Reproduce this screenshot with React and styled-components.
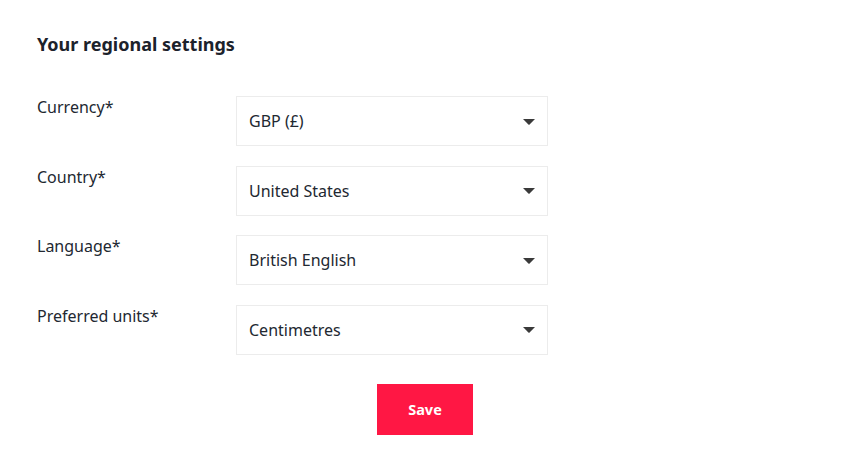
import React from "react";
import styled, { createGlobalStyle } from "styled-components";

const Global = createGlobalStyle`
  html, body { margin: 0; padding: 0; background: #ffffff; }
  body { font-family: "Noto Sans", "Liberation Sans", sans-serif; color: #222831; }
`;

const Page = styled.div`
  width: 852px;
  box-sizing: border-box;
  padding: 32px 0 0 37px;
`;

const Heading = styled.h2`
  margin: 0 0 40px 0;
  font-size: 18px;
  line-height: 24px;
  font-weight: 700;
  color: #1c222b;
`;

const Form = styled.div`
  display: grid;
  grid-template-columns: 199px 312px;
  row-gap: 19.67px;
`;

const Label = styled.div`
  font-size: 16px;
  line-height: 20px;
  padding-top: 1px;
  color: #222831;
`;

const Select = styled.div`
  height: 50px;
  box-sizing: border-box;
  border: 1px solid #ececec;
  display: flex;
  align-items: center;
  justify-content: space-between;
  padding: 0 12px 0 12px;
  font-size: 16px;
  color: #222831;
`;

const Arrow = styled.svg`
  width: 12px;
  height: 6px;
  margin-top: 1px;
`;

const Actions = styled.div`
  display: flex;
  justify-content: center;
  width: 776px;
  margin-top: 29px;
`;

const Button = styled.button`
  width: 96px;
  height: 51px;
  border: 0;
  background: #ff1744;
  color: #ffffff;
  font-family: "Noto Sans", "Liberation Sans", sans-serif;
  font-weight: 700;
  font-size: 14.5px;
  cursor: pointer;
`;

const rows = [
  ["Currency*", "GBP (£)"],
  ["Country*", "United States"],
  ["Language*", "British English"],
  ["Preferred units*", "Centimetres"],
];

export default function App() {
  return (
    <>
      <Global />
      <Page>
        <Heading>Your regional settings</Heading>
        <Form>
          {rows.map(([l, v]) => (
            <React.Fragment key={l}>
              <Label>{l}</Label>
              <Select>
                <span>{v}</span>
                <Arrow viewBox="0 0 12 6">
                  <path d="M0 0 H12 L6.6 5.6 Q6 6 5.4 5.6 Z" fill="#3a3a3a" />
                </Arrow>
              </Select>
            </React.Fragment>
          ))}
        </Form>
        <Actions>
          <Button>Save</Button>
        </Actions>
      </Page>
    </>
  );
}
